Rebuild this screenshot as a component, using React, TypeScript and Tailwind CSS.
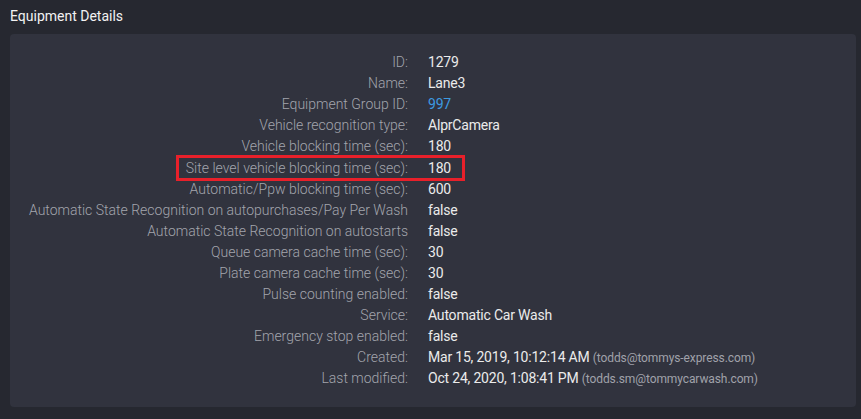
import React from "react";

type Row = { label: string; value: React.ReactNode; highlight?: boolean };

const rows: Row[] = [
  { label: "ID:", value: "1279" },
  { label: "Name:", value: "Lane3" },
  { label: "Equipment Group ID:", value: <span className="text-[#3d9be2]">997</span> },
  { label: "Vehicle recognition type:", value: "AlprCamera" },
  { label: "Vehicle blocking time (sec):", value: "180" },
  { label: "Site level vehicle blocking time (sec):", value: "180", highlight: true },
  { label: "Automatic/Ppw blocking time (sec):", value: "600" },
  { label: "Automatic State Recognition on autopurchases/Pay Per Wash", value: "false" },
  { label: "Automatic State Recognition on autostarts", value: "false" },
  { label: "Queue camera cache time (sec):", value: "30" },
  { label: "Plate camera cache time (sec):", value: "30" },
  { label: "Pulse counting enabled:", value: "false" },
  { label: "Service:", value: "Automatic Car Wash" },
  { label: "Emergency stop enabled:", value: "false" },
  {
    label: "Created:",
    value: (
      <>
        Mar 15, 2019, 10:12:14 AM{" "}
        <span className="text-[12px] text-[#a0a2aa] tracking-[-0.1px]">(todds@tommys-express.com)</span>
      </>
    ),
  },
  {
    label: "Last modified:",
    value: (
      <>
        Oct 24, 2020, 1:08:41 PM{" "}
        <span className="text-[12px] text-[#a0a2aa] tracking-[-0.1px]">(todds.sm@tommycarwash.com)</span>
      </>
    ),
  },
];

export default function App() {
  return (
    <div
      className="w-[861px] h-[419px] bg-[#262830] flex flex-col"
      style={{ fontFamily: "Roboto, 'Liberation Sans', sans-serif" }}
    >
      <div className="h-[34px] px-[10px] flex items-center text-[14px] text-[#f2f2f2] pb-[1px]">
        Equipment Details
      </div>
      <div className="ml-[10px] mr-[5px] h-[373px] bg-[#31333e] rounded-[4px] pt-[18px] flex flex-col">
        {rows.map((r, i) => (
          <div key={i} className="relative flex h-[21.1px] items-center text-[14px] leading-[21px]">
            <div className="w-[398px] shrink-0 text-right font-light text-[#a3a5ad] whitespace-nowrap">{r.label}</div>
            <div className="pl-[20px] text-[#ebebeb] whitespace-nowrap tracking-[-0.2px]">{r.value}</div>
            {r.highlight && (
              <div className="absolute left-[166px] top-[-2px] w-[289px] h-[26px] border-[3px] border-[#e8202a] pointer-events-none" />
            )}
          </div>
        ))}
      </div>
    </div>
  );
}
